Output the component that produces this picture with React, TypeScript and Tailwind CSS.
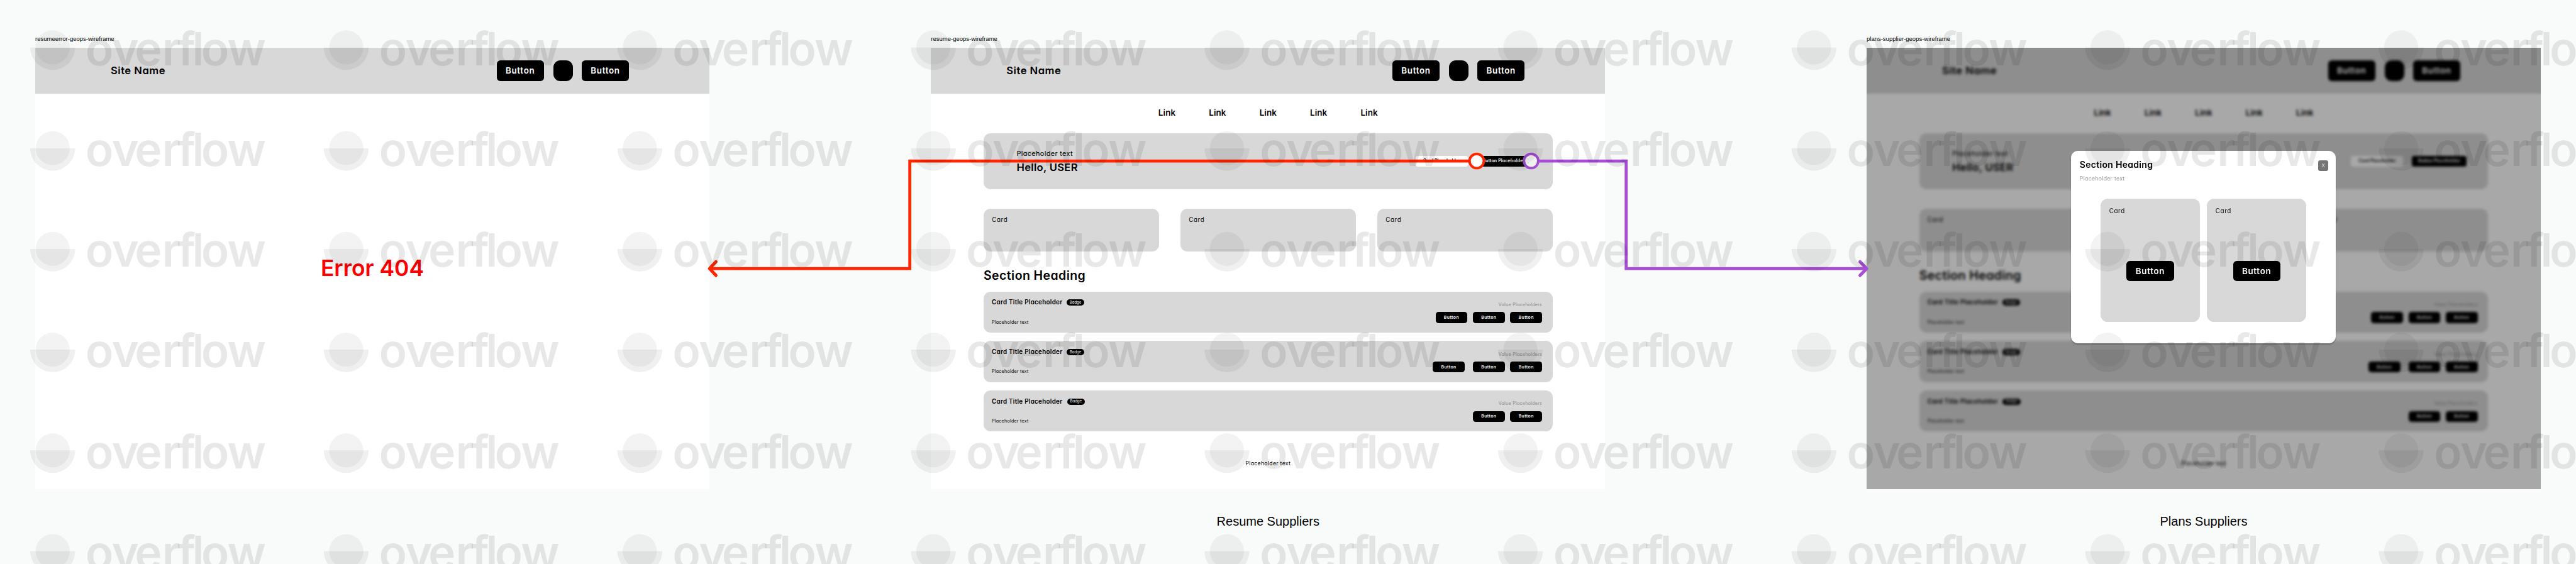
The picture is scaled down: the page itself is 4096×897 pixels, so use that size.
import type { ReactNode } from "react";

const UI_FONT = "font-['Inter',sans-serif] [font-feature-settings:'cv11']";

function HeaderButton() {
  return (
    <div className="flex h-[32.8px] w-[75.3px] items-center justify-center rounded-[5.6px] bg-black text-[13.4px] font-semibold tracking-[0.7px] text-white">
      Button
    </div>
  );
}

function SiteHeader() {
  return (
    <header className="flex h-[73px] items-center bg-[#d8d8d8] pl-[120px] pr-[127.9px]">
      <div className="flex-1 text-[16.6px] font-semibold tracking-[0.5px]">Site Name</div>
      <HeaderButton />
      <div className="ml-[15.3px] mr-[13.7px] h-[32.8px] w-[31px] rounded-[11px] bg-black" />
      <HeaderButton />
    </header>
  );
}

function InfoCard() {
  return (
    <div className="h-[68.7px] w-[278.6px] rounded-[11.2px] bg-[#d8d8d8] pl-[13.2px] pt-[10.2px] text-[9.8px] leading-[15px] tracking-[0.6px]">
      Card
    </div>
  );
}

function SmallButton({ className = "" }: { className?: string }) {
  return (
    <div
      className={`flex h-[17.3px] w-[50.8px] items-center justify-center rounded-[4.5px] bg-black text-[6.8px] font-semibold tracking-[0.45px] text-white ${className}`}
    >
      Button
    </div>
  );
}

function ListRow({ badgeGap = "ml-[6.5px]", children }: { badgeGap?: string; children: ReactNode }) {
  return (
    <div className="flex h-[65.5px] justify-between rounded-[11.2px] bg-[#d8d8d8] pl-[13px] pr-[16.5px]">
      <div className="pt-[10.9px]">
        <div className="flex items-center">
          <div className="whitespace-nowrap text-[9.8px] font-semibold leading-[14px] tracking-[0.3px]">Card Title Placeholder</div>
          <div
            className={`flex h-[10px] w-[28.5px] items-center justify-center rounded-full bg-black pb-[0.8px] text-[6px] leading-[8px] text-white ${badgeGap}`}
          >
            Badge
          </div>
        </div>
        <div className="mt-[19.3px] text-[7.05px] leading-[10px] tracking-[0.27px]">Placeholder text</div>
      </div>
      <div className="flex flex-col items-end pt-[16.3px]">
        <div className="text-[7.05px] leading-[10px] tracking-[0.28px] text-[#8a8a8a]">Value Placeholders</div>
        <div className="mt-[6.5px] flex gap-[8.6px]">{children}</div>
      </div>
    </div>
  );
}

function ResumePage() {
  return (
    <>
      <SiteHeader />
      <nav className="flex h-[63.2px] justify-center pb-[3.2px]">
        {[0, 1, 2, 3, 4].map((n) => (
          <div key={n} className="flex w-[80.4px] items-center justify-center text-[13.4px] font-semibold tracking-[0.1px]">
            Link
          </div>
        ))}
      </nav>
      <main className="mx-[83.7px]">
        <section className="flex h-[88.7px] justify-between rounded-[11.2px] bg-[#d8d8d8] pl-[52.5px] pr-[34.5px]">
          <div className="pt-[24.6px]">
            <div className="text-[10.9px] leading-[15px] tracking-[0.35px]">Placeholder text</div>
            <div className="mt-[1.9px] text-[16.6px] font-semibold leading-[24px] tracking-[0.3px]">Hello, USER</div>
          </div>
          <div className="flex items-center gap-[13.9px]">
            <div className="flex h-[17.3px] w-[83.2px] items-center justify-center rounded-[3.5px] bg-white text-[7px] font-semibold">
              Card Placeholder
            </div>
            <div className="flex h-[17.3px] w-[86.5px] items-center justify-center rounded-[3.5px] bg-black text-[7px] font-semibold tracking-[0.15px] text-white">
              Button Placeholder
            </div>
          </div>
        </section>
        <section className="mt-[30.8px] flex justify-between">
          <InfoCard />
          <InfoCard />
          <InfoCard />
        </section>
        <h2 className="mt-[24.2px] text-[19.5px] font-semibold leading-[28px] tracking-[0.42px]">Section Heading</h2>
        <section className="mt-[11.1px] flex flex-col gap-[13.2px]">
          <ListRow>
            <SmallButton />
            <SmallButton />
            <SmallButton />
          </ListRow>
          <ListRow>
            <SmallButton className="mr-[4.3px]" />
            <SmallButton />
            <SmallButton />
          </ListRow>
          <ListRow badgeGap="ml-[7.2px]">
            <SmallButton />
            <SmallButton />
          </ListRow>
        </section>
      </main>
      <footer className="mt-[45px] text-center text-[8.7px] leading-[12px] tracking-[0.3px]">Placeholder text</footer>
    </>
  );
}

function PlanCard() {
  return (
    <div className="flex h-[196px] w-[157.4px] flex-col rounded-[11.5px] bg-[#d8d8d8] pt-[12px]">
      <div className="pl-[13.4px] text-[9.8px] leading-[15px] tracking-[0.6px]">Card</div>
      <div className="mt-[71.3px] flex justify-center">
        <HeaderButton />
      </div>
    </div>
  );
}

function PlansModal() {
  return (
    <div className="absolute left-[325.3px] top-[164.1px] h-[306.4px] w-[420.6px] rounded-[11.2px] bg-white px-[13.5px] pt-[12px] shadow-[0_2px_2px_rgba(0,0,0,0.25)]">
      <div className="flex justify-between">
        <div>
          <h3 className="text-[14.1px] font-semibold leading-[20px] tracking-[0.25px]">Section Heading</h3>
          <div className="mt-[6.5px] text-[8.7px] leading-[12px] tracking-[0.3px] text-[#999999]">Placeholder text</div>
        </div>
        <div className="mr-[-1.8px] mt-[3px] flex h-[17px] w-[16.2px] items-center justify-center rounded-[3.4px] bg-[#757575] text-[8px] font-light text-white">
          X
        </div>
      </div>
      <div className="mt-[25.9px] flex justify-center gap-[11.8px]">
        <PlanCard />
        <PlanCard />
      </div>
    </div>
  );
}

function Board({ label, caption, className = "", children }: { label: string; caption?: string; className?: string; children: ReactNode }) {
  return (
    <section className={`w-[1072px] shrink-0 ${className}`}>
      <div className="h-[19.9px] font-['Liberation_Sans',sans-serif] text-[9.5px] leading-[12px]">{label}</div>
      <div className={`relative h-[702.4px] overflow-hidden bg-white ${UI_FONT}`}>{children}</div>
      {caption && (
        <div className="mt-[38.7px] text-center font-['Liberation_Sans',sans-serif] text-[20px] leading-[24px]">{caption}</div>
      )}
    </section>
  );
}

function Connectors() {
  return (
    <svg className="absolute inset-0" width="4096" height="897" viewBox="0 0 7336 1606.5" fill="none">
      <g stroke="#ff2600" strokeWidth="8.5">
        <path d="M4205 458.5H2591V765H2022" />
        <path d="M2039 745.5L2020.5 765L2039 784.5" strokeWidth="9" strokeLinecap="round" strokeLinejoin="round" />
        <circle cx="4205.4" cy="458.5" r="20.3" strokeWidth="7" fill="#ffffff" />
      </g>
      <g stroke="#a64fd5" strokeWidth="8.5">
        <path d="M4360 458.5H4631V765H5315" />
        <path d="M5297 745.5L5316 765L5297 784.5" strokeWidth="9" strokeLinecap="round" strokeLinejoin="round" />
        <circle cx="4360.4" cy="458.5" r="20.3" strokeWidth="7" fill="#ffffff" />
      </g>
    </svg>
  );
}

const COLS = [0, 1, 2, 3, 4, 5, 6, 7, 8];
const ROWS = [0, 1, 2, 3, 4, 5];

function Watermark() {
  return (
    <svg className="pointer-events-none absolute inset-0" width="4096" height="897" viewBox="0 0 4096 897">
      {ROWS.map((r) =>
        COLS.map((c) => (
          <g key={`${r}-${c}`} transform={`translate(${83.8 + c * 466.77} ${75.4 + r * 160.24})`} fill="#000000">
            <circle r="27.2" fillOpacity="0.047" />
            <path d="M-35.8 0H35.8A35.8 35.8 0 0 1 -35.8 0Z" fillOpacity="0.058" />
            <text
              className="font-['Inter',sans-serif] text-[73.3px] font-[580]"
              x="52 94 130.5 174 198.6 221.6 236 277.8"
              y="28.3"
              fillOpacity="0.092"
            >
              overflow
            </text>
          </g>
        )),
      )}
    </svg>
  );
}

export default function App() {
  return (
    <div className="relative flex h-[897px] w-[4096px] overflow-hidden bg-[#f9fbfa] pl-[56px] pt-[56px] text-black">
      <Board label="resumeerror-geops-wireframe">
        <SiteHeader />
        <div className="flex h-[556px] items-center justify-center pb-px text-[35.4px] font-semibold text-[#ff0000]">Error 404</div>
      </Board>
      <Board label="resume-geops-wireframe" caption="Resume Suppliers" className="ml-[352.3px]">
        <ResumePage />
      </Board>
      <Board label="plans-supplier-geops-wireframe" caption="Plans Suppliers" className="ml-[415.7px]">
        <ResumePage />
        <div className="absolute inset-0 bg-black/34 backdrop-blur-[2px]" />
        <PlansModal />
      </Board>
      <Connectors />
      <Watermark />
    </div>
  );
}
